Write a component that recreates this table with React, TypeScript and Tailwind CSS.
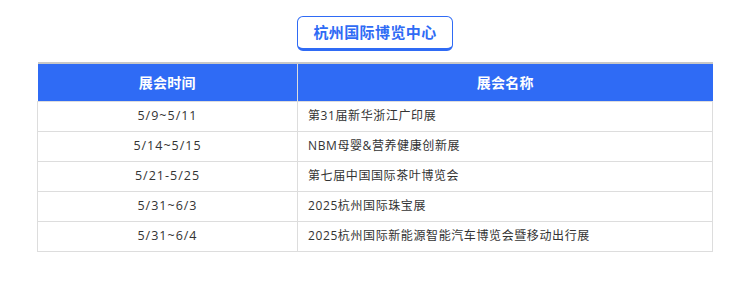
const rows = [
  { date: "5/9~5/11", name: "第31届新华浙江广印展" },
  { date: "5/14~5/15", name: "NBM母婴&营养健康创新展" },
  { date: "5/21-5/25", name: "第七届中国国际茶叶博览会" },
  { date: "5/31~6/3", name: "2025杭州国际珠宝展" },
  { date: "5/31~6/4", name: "2025杭州国际新能源智能汽车博览会暨移动出行展" },
]

export default function App() {
  return (
    <div
      className="w-[744px] h-[281px] bg-white pt-[16px]"
      style={{ fontFamily: '"Open Sans", "Noto Sans CJK SC", sans-serif' }}
    >
      <div className="flex justify-center">
        <div className="ml-[6px] w-[156px] h-[35px] flex items-center justify-center rounded-[6px] border border-[#2f6bf5] border-b-[3px] bg-white text-[15px] tracking-[0.4px] font-bold text-[#2f6bf5]">
          杭州国际博览中心
        </div>
      </div>

      <table className="mt-[11px] ml-[37px] w-[676px] border-collapse border-t-2 border-t-[#c8c8c8] text-[12px] text-[#333]">
        <thead>
          <tr className="h-[38px] bg-[#2f6bf5] text-white text-[14px] font-bold tracking-[0.3px]">
            <th className="w-[260px] border-r border-[#ddd] font-bold">展会时间</th>
            <th className="font-bold">展会名称</th>
          </tr>
        </thead>
        <tbody>
          {rows.map((r) => (
            <tr key={r.date + r.name} className="h-[30px]">
              <td className="border border-[#ddd] text-center text-[12.5px] tracking-[1px]">{r.date}</td>
              <td className="border border-[#ddd] pl-[10px] tracking-[0.6px]">{r.name}</td>
            </tr>
          ))}
        </tbody>
      </table>
    </div>
  )
}
